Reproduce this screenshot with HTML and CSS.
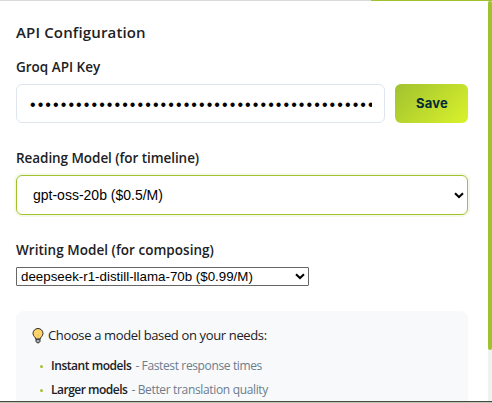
FILE: index.html
```html
<!DOCTYPE html>
<html lang="en">
<head>
<meta charset="utf-8">
<title>API Configuration</title>
<link rel="stylesheet" href="styles.css">
</head>
<body>
<div class="app">
  <div class="topline"><span class="topline-active"></span></div>
  <div class="view">
    <main class="content">
      <h1><span class="t-title">API Configuration</span></h1>
      <h2 class="label-key"><span class="t-key">Groq API Key</span></h2>
      <div class="key-row">
        <div class="key-input"><div class="dots">•••••••••••••••••••••••••••••••••••••••••••••</div></div>
        <button class="save">Save</button>
      </div>
      <h2 class="label-reading"><span class="t-reading">Reading Model (for timeline)</span></h2>
      <div class="select-large"><span>gpt-oss-20b ($0.5/M)</span><svg class="chevron" viewBox="0 0 10 7"><path d="M1 1.2 5 5 9 1.2"/></svg></div>
      <h2 class="label-writing"><span class="t-writing">Writing Model (for composing)</span></h2>
      <div class="select-small"><span>deepseek-r1-distill-llama-70b ($0.99/M)</span><svg class="chevron" viewBox="0 0 10 7"><path d="M1 1.2 5 5 9 1.2"/></svg></div>
      <section class="tips">
        <p class="tips-head">
          <svg class="bulb" viewBox="0 0 12 16"><path d="M3.9 11.2C3.8 9.3 1 8.2 1 5.5a5 5 0 0 1 10 0c0 2.7-2.8 3.8-2.9 5.7z" fill="#ffd36b" stroke="#292929" stroke-width="1"/><path d="M4.7 6.3 6 7.2l1.3-.9M6 7.2v3.5" fill="none" stroke="#f2b34b" stroke-width=".6"/><path d="M4 11.2h4v2.2L6.9 14.8H5.1L4 13.4z" fill="#a9adb2" stroke="#292929" stroke-width="1"/></svg>
          <span class="t-choose">Choose a model based on your needs:</span>
        </p>
        <ul>
          <li><strong class="t-instant">Instant models</strong><span class="t-fast">- Fastest response times</span></li>
          <li><strong class="t-larger">Larger models</strong><span class="t-better">- Better translation quality</span></li>
        </ul>
      </section>
    </main>
    <div class="scroll-track"><div class="scroll-thumb"></div></div>
  </div>
  <div class="bottomline"></div>
</div>
</body>
</html>
```
FILE: styles.css
```css
* { box-sizing: border-box; }
body { margin: 0; background: #fff; color: #202124; font-family: "Open Sans", "Noto Sans", sans-serif; }
.app { width: 492px; height: 403px; overflow: hidden; display: flex; flex-direction: column; }
.topline { height: 1px; flex: none; background: #dadada; display: flex; justify-content: flex-end; }
.topline-active { width: 121px; background: #a0c22f; }
.view { flex: 1; min-height: 0; display: flex; }
.content { width: 488px; padding: 19px 20px 0 16px; overflow: hidden; white-space: nowrap; }
h1, h2, p, ul { margin: 0; padding: 0; }
h1 { font-size: 15px; font-weight: 600; line-height: 24px; letter-spacing: .15px; }
h2 { font-size: 13.5px; font-weight: 600; line-height: 20px; }
.t-reading { letter-spacing: -.06px; }
.t-writing { letter-spacing: .03px; }
.label-key { margin-top: 13px; }
.key-row { display: flex; gap: 10px; margin-top: 7px; height: 39px; }
.key-input { width: 369px; border: 1px solid #dfe5ec; border-radius: 6px; padding: 0 12px; }
.dots { height: 37px; overflow: hidden; color: #000; font: 16px/39px "Liberation Sans", sans-serif; letter-spacing: 2.08px; text-indent: 1px; }
.save { width: 73px; border: 0; padding: 0 0 0 1px; border-radius: 6px; background: linear-gradient(135deg, #a0c230, #daf22b); color: #032b36; font: 700 13px/39px Inter, sans-serif; letter-spacing: .2px; }
.label-reading { margin-top: 25px; }
.select-large { height: 40px; margin-top: 7px; border: 1px solid #a0c22f; border-radius: 6px; box-shadow: 0 0 0 2px #a0c22f1a; display: flex; align-items: center; justify-content: space-between; padding: 0 3px 0 16px; color: #000; font: 14px "Liberation Sans", sans-serif; }
.chevron { width: 10px; height: 7px; fill: none; stroke: #000; stroke-width: 2; flex: none; }
.label-writing { margin-top: 25px; }
.select-small { width: 293px; height: 19px; margin-top: 7px; border: 1px solid #666; border-radius: 1px; display: flex; align-items: center; justify-content: space-between; padding: 0 3px 0 4px; color: #000; font: 13.333px "Liberation Sans", sans-serif; }
.tips { height: 140px; margin-top: 25px; padding: 14px 16px; border-radius: 8px; background: #f8f9fb; }
.tips-head { display: flex; align-items: center; height: 21px; font-size: 13px; line-height: 21px; }
.t-choose { letter-spacing: -.36px; }
.bulb { width: 12px; height: 16px; margin-right: 4px; }
.tips ul { list-style: none; margin-top: 8px; }
.tips li { height: 24px; padding-left: 8px; display: flex; align-items: center; font-size: 12px; line-height: 22px; color: #6b7c8c; }
.tips li::before { content: ""; width: 3px; height: 3px; border-radius: 50%; background: #a0c22f; margin-right: 8px; }
.tips strong { font-weight: 600; color: #202124; margin-right: 4px; }
.t-instant { letter-spacing: -.45px; }
.t-larger { letter-spacing: -.5px; }
.t-fast { letter-spacing: -.37px; }
.t-better { letter-spacing: -.34px; }
.scroll-track { width: 4px; background: #f1f1f1; }
.scroll-thumb { height: 349px; border-radius: 2px; background: #a0c22f; }
.bottomline { flex: none; height: 2px; background: #bcc5b2; border-top: 1px solid #444b43; }
```
